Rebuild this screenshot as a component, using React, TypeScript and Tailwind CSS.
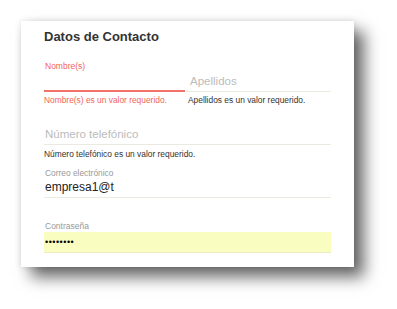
export default function App() {
  return (
    <div className="min-h-screen bg-white pl-[21px] pt-[21px]" style={{ fontFamily: '"Liberation Sans", Arial, sans-serif' }}>
      <div className="h-[246px] w-[333px] bg-white px-[23px] pt-[8px] shadow-[0_0_6px_rgba(0,0,0,0.12),10px_10px_15px_rgba(0,0,0,0.6)]">
        <h2 className="text-[13px] font-bold leading-[15px] text-[#333]">Datos de Contacto</h2>

        {/* Nombre / Apellidos */}
        <div className="mt-[17px] flex items-end">
          <div className="w-[141px]">
            <div className="pl-px text-[8.5px] leading-[10px] text-[#f2635b]">Nombre(s)</div>
            <div className="h-[21px] border-b-2 border-[#f2726a]" />
          </div>
          <div className="ml-px flex-1 border-b border-[#ece9e1] pb-[3px] pl-[4px] text-[11.5px] leading-[14px] text-[#bbb]">
            Apellidos
          </div>
        </div>
        <div className="mt-[3px] flex text-[8.4px] leading-[10px]">
          <div className="w-[141px] text-[#f2635b]">Nombre(s) es un valor requerido.</div>
          <div className="ml-px flex-1 pl-[2px] text-[#333]">Apellidos es un valor requerido.</div>
        </div>

        {/* Teléfono */}
        <div className="mt-[22px] border-b border-[#ece9e1] pb-[3px] pl-px text-[11.5px] leading-[14px] text-[#bbb]">
          Número telefónico
        </div>
        <div className="mt-[4px] text-[8.4px] leading-[10px] text-[#333]">Número telefónico es un valor requerido.</div>

        {/* Correo */}
        <div className="mt-[9px] pl-px text-[8.4px] leading-[10px] text-[#999]">Correo electrónico</div>
        <div className="mt-[2px] border-b border-[#ece9e1] pb-[3px] pl-px text-[12px] leading-[14px] text-[#222]">
          empresa1@t
        </div>

        {/* Contraseña */}
        <div className="mt-[23px] pl-px text-[8.5px] leading-[10px] text-[#999]">Contraseña</div>
        <div className="mt-px flex h-[21px] items-center border-b border-[#ecebc4] bg-[#fafdc0] pl-px">
          <span className="text-[9px] leading-none tracking-[0.5px] text-black">••••••••</span>
        </div>
      </div>
    </div>
  );
}
